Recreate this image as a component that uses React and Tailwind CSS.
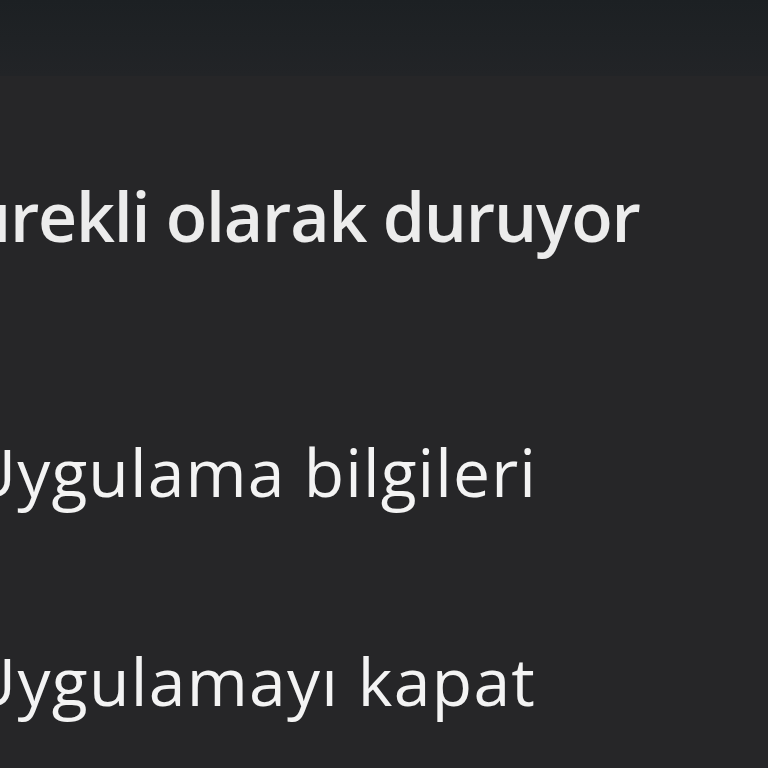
export default function App() {
  return (
    <div className="w-[768px] h-[768px] overflow-hidden bg-[#262628] flex flex-col" style={{ fontFamily: '"Open Sans", Lato, sans-serif' }}>
      <div className="h-[76px] shrink-0 bg-gradient-to-b from-[#1c2023] to-[#222427]" />
      <div className="flex flex-col">
        <div className="h-[100px]" />
        <div className="whitespace-nowrap text-[#ececec] font-semibold text-[68px] leading-[80px] tracking-[-1.2px] -ml-[64px]">sürekli olarak duruyor</div>
        <div className="h-[175px]" />
        <div className="whitespace-nowrap text-[#f3f3f3] text-[66px] leading-[80px] tracking-[1.1px] -ml-[32px]">Uygulama bilgileri</div>
        <div className="h-[129px]" />
        <div className="whitespace-nowrap text-[#f3f3f3] text-[66px] leading-[80px] tracking-[1.3px] -ml-[32px]">Uygulamayı kapat</div>
      </div>
    </div>
  );
}
